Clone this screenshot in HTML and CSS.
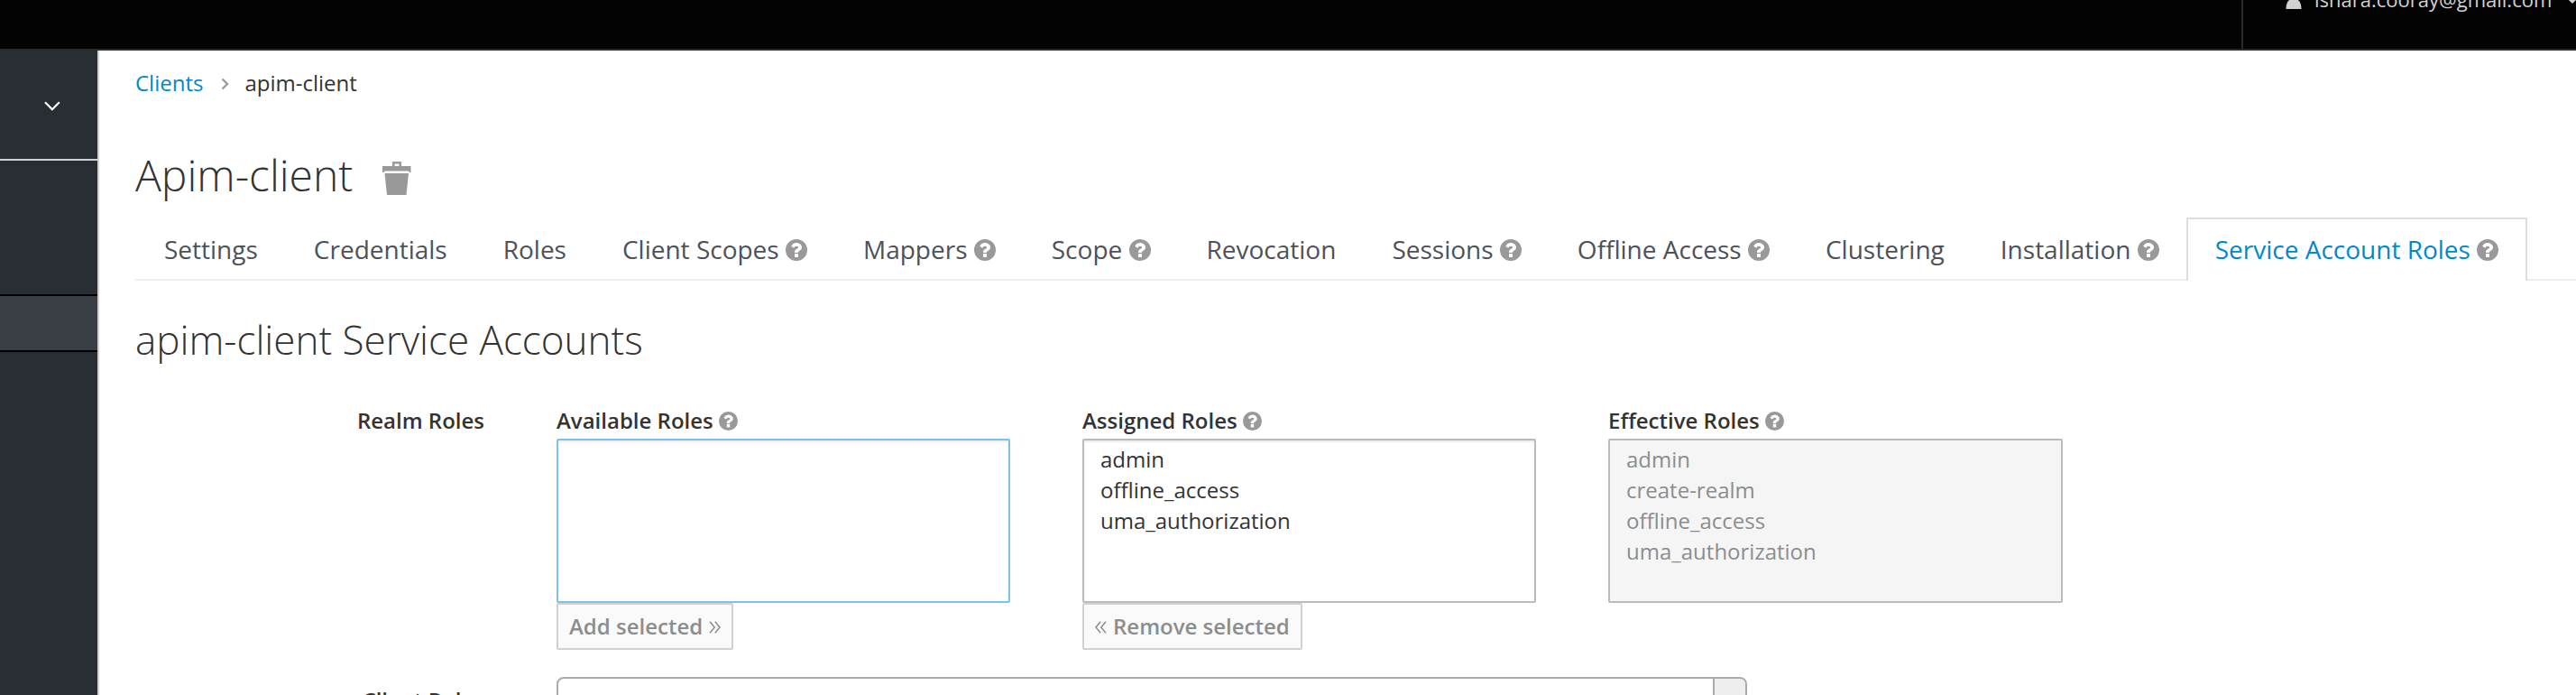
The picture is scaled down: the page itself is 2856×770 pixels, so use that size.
FILE: index.html
```html
<!DOCTYPE html>
<html lang="en">
<head>
<meta charset="utf-8">
<title>apim-client</title>
<link rel="stylesheet" href="styles.css">
</head>
<body>
<svg width="0" height="0" class="defs">
  <symbol id="help" viewBox="128 128 1536 1536"><path fill-rule="evenodd" d="M896 128a768 768 0 1 1 0 1536a768 768 0 1 1 0-1536zM1024 1376v-192q0-14-9-23t-23-9h-192q-14 0-23 9t-9 23v192q0 14 9 23t23 9h192q14 0 23-9t9-23zm256-672q0-88-55.500-163t-138.500-116-170-41q-243 0-371 213-15 24 8 42l132 100q7 6 19 6 16 0 25-12 53-68 86-92 34-24 86-24 48 0 85.500 26t37.500 59q0 38-20 61t-68 45q-63 28-115.500 86.500t-52.500 125.500v36q0 14 9 23t23 9h192q14 0 23-9t9-23q0-19 21.500-49.500t54.500-49.500q32-18 49-28.500t46-35 44.500-48 28-60.500 12.500-81z"/></symbol>
</svg>
<header class="topbar">
  <div class="user">
    <svg class="user-icon" viewBox="0 0 18 24"><circle cx="9" cy="6" r="5.500"/><path d="M0.500 24C0.500 16 4 12.500 9 12.500S17.500 16 17.500 24z"/></svg>
    <span class="user-name">ishara.cooray@gmail.com</span>
    <svg class="user-caret" viewBox="0 0 18 12"><path d="M1.500 1.500L9 9l7.500-7.500"/></svg>
  </div>
</header>
<div class="body">
  <nav class="sidebar">
    <div class="realm"><svg class="realm-caret" viewBox="0 0 18 12"><path d="M1 1.300L8.900 9.200l7.900-7.900"/></svg></div>
    <div class="menu"><div class="menu-active"></div></div>
  </nav>
  <main class="content">
    <div class="breadcrumb"><a class="link">Clients</a><svg class="sep" viewBox="0 0 9 14"><path d="M1.500 1.500L7 7l-5.500 5.500"/></svg><span>apim-client</span></div>
    <h1 class="title"><span>Apim-client</span><svg class="trash" viewBox="0 0 32 37"><path fill-rule="evenodd" d="M11 5V0h10v5h10.500v7h-1.500l-1-1.500H2.500L1.500 12H0V5zM13.500 2.500V5h5V2.500z"/><path d="M2.500 13h26.500l-2.500 24H5z"/></svg></h1>
    <div class="tabs">
      <div class="tab">Settings</div>
      <div class="tab">Credentials</div>
      <div class="tab">Roles</div>
      <div class="tab">Client Scopes <svg class="help"><use href="#help"/></svg></div>
      <div class="tab">Mappers <svg class="help"><use href="#help"/></svg></div>
      <div class="tab">Scope <svg class="help"><use href="#help"/></svg></div>
      <div class="tab">Revocation</div>
      <div class="tab">Sessions <svg class="help"><use href="#help"/></svg></div>
      <div class="tab">Offline Access <svg class="help"><use href="#help"/></svg></div>
      <div class="tab">Clustering</div>
      <div class="tab">Installation <svg class="help"><use href="#help"/></svg></div>
      <div class="tab active">Service Account Roles <svg class="help"><use href="#help"/></svg></div>
    </div>
    <h2 class="subtitle">apim-client Service Accounts</h2>
    <div class="roles">
      <div class="label row-label">Realm Roles</div>
      <div class="col">
        <div class="label">Available Roles <svg class="help"><use href="#help"/></svg></div>
        <div class="list focus"></div>
        <div class="btn"><span>Add selected</span><svg class="chev" viewBox="0 0 13 14"><path d="M1 .8L6.200 7 1 13.200M6.800.8L12 7l-5.200 6.200"/></svg></div>
      </div>
      <div class="col">
        <div class="label">Assigned Roles <svg class="help"><use href="#help"/></svg></div>
        <div class="list"><div>admin</div><div>offline_access</div><div>uma_authorization</div></div>
        <div class="btn"><svg class="chev" viewBox="0 0 13 14"><path d="M6.200.8L1 7l5.200 6.200M12 .8L6.800 7l5.200 6.200"/></svg><span>Remove selected</span></div>
      </div>
      <div class="col">
        <div class="label">Effective Roles <svg class="help"><use href="#help"/></svg></div>
        <div class="list disabled"><div>admin</div><div>create-realm</div><div>offline_access</div><div>uma_authorization</div></div>
      </div>
    </div>
    <div class="client-row">
      <div class="label row-label client-label">Client Roles</div>
      <div class="select"><div class="select-arrow"></div></div>
    </div>
  </main>
</div>
</body>
</html>
```
FILE: styles.css
```css
* { box-sizing: border-box; }
body {
  margin: 0;
  width: 2856px;
  height: 770px;
  overflow: hidden;
  background: #fff;
  color: #333;
  font: 24px/34px "Open Sans", "Noto Sans", sans-serif;
}
svg { display: block; flex: none; }
.defs { position: absolute; }
.topbar {
  height: 56px;
  background: #030303;
  border-bottom: 2px solid #292929;
  display: flex;
  justify-content: flex-end;
  overflow: hidden;
}
.user {
  width: 371px;
  flex: none;
  border-left: 2px solid #292929;
  padding-left: 47px;
  display: flex;
  align-items: flex-start;
  color: #d1d1d1;
  white-space: nowrap;
}
.user-icon { width: 18px; height: 24px; margin-top: -14px; fill: #d1d1d1; }
.user-name { margin: -18px 0 0 14px; font-size: 22px; }
.user-caret {
  width: 18px;
  height: 12px;
  margin: -7px 0 0 14px;
  fill: none;
  stroke: #d1d1d1;
  stroke-width: 3;
}
.body { display: flex; height: 714px; overflow: hidden; }
.sidebar {
  width: 110px;
  flex: none;
  background: #292e34;
  border-right: 2px solid #d1d1d1;
}
.realm {
  height: 122px;
  border-bottom: 2px solid #d1d1d1;
  padding: 56px 0 0 49px;
}
.realm-caret { width: 18px; height: 12px; fill: none; stroke: #fff; stroke-width: 2.200; }
.menu { padding-top: 148px; }
.menu-active {
  height: 64px;
  background: #393f45;
  border-top: 2px solid #000;
  border-bottom: 2px solid #000;
}
.content { flex: 1; min-width: 0; padding: 18px 0 0 40px; }
.breadcrumb { display: flex; height: 36px; line-height: 36px; }
.link { color: #0088ce; }
.sep {
  width: 9px;
  height: 14px;
  margin: 12px 17px 0 20px;
  fill: none;
  stroke: #9c9c9c;
  stroke-width: 2.400;
}
.title {
  display: flex;
  height: 52px;
  margin: 58px 0 0;
  font-size: 48px;
  font-weight: 300;
  line-height: 52px;
}
.trash { width: 32px; height: 37px; margin: 11px 0 0 33px; fill: #999; }
.tabs {
  display: flex;
  height: 70px;
  margin-top: 21px;
  font-size: 28px;
  line-height: 66px;
  color: #4d5258;
  white-space: nowrap;
  box-shadow: inset 0 -2px #ededed;
}
.tab { padding: 2px 32px 0; margin-right: -2px; }
.help {
  display: inline-block;
  width: 24px;
  height: 24px;
  vertical-align: -2px;
  fill: #999;
}
.active {
  padding: 0 30px;
  color: #0088ce;
  background: #fff;
  border: 2px solid #ddd;
  border-bottom: 0;
  border-radius: 2px 2px 0 0;
}
.subtitle {
  margin: 35px 0 0;
  font-size: 44px;
  font-weight: 300;
  line-height: 60px;
}
.roles {
  display: grid;
  grid-template-columns: 387px 503px 503px 504px;
  column-gap: 80px;
  height: 344px;
  padding-top: 43px;
}
.label { font-weight: 600; height: 37px; white-space: nowrap; }
.label .help { width: 21px; height: 21px; }
.row-label { text-align: right; }
.list {
  height: 182px;
  padding: 4px 18px;
  border: 2px solid #bbb;
  border-radius: 2px;
  box-shadow: inset 0 2px 2px rgba(3, 3, 3, .075);
}
.focus { border-color: #7dc3e8; }
.disabled { background: #f5f5f5; color: #8b8d8f; box-shadow: none; }
.btn {
  display: inline-flex;
  align-items: center;
  gap: 7px;
  height: 52px;
  padding: 0 12px;
  border: 2px solid #d1d1d1;
  border-radius: 2px;
  background: #fafafa;
  color: #8b8d8f;
  font-weight: 600;
  white-space: nowrap;
}
.chev { width: 13px; height: 14px; margin-top: 2px; fill: none; stroke: #8b8d8f; stroke-width: 1.500; }
.client-row { display: flex; gap: 80px; height: 60px; }
.client-label { width: 387px; padding-top: 9px; }
.select {
  width: 1320px;
  height: 60px;
  border: 2px solid #aaa;
  border-radius: 8px;
  display: flex;
  justify-content: flex-end;
  overflow: hidden;
}
.select-arrow { width: 36px; background: #eee; border-left: 2px solid #aaa; }
```
